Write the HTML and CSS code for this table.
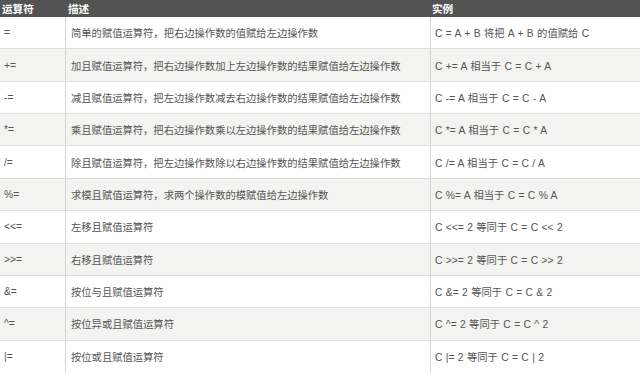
FILE: index.html
```html
<!DOCTYPE html>
<html lang="zh">
<head>
<meta charset="utf-8">
<link rel="stylesheet" href="styles.css">
</head>
<body>
<div class="table">
  <div class="th c1">运算符</div><div class="th c2">描述</div><div class="th c3">实例</div>

  <div class="td c1">=</div><div class="td c2">简单的赋值运算符，把右边操作数的值赋给左边操作数</div><div class="td c3">C = A + B 将把 A + B 的值赋给 C</div>

  <div class="td c1 alt">+=</div><div class="td c2 alt">加且赋值运算符，把右边操作数加上左边操作数的结果赋值给左边操作数</div><div class="td c3 alt">C += A 相当于 C = C + A</div>

  <div class="td c1">-=</div><div class="td c2">减且赋值运算符，把左边操作数减去右边操作数的结果赋值给左边操作数</div><div class="td c3">C -= A 相当于 C = C - A</div>

  <div class="td c1 alt">*=</div><div class="td c2 alt">乘且赋值运算符，把右边操作数乘以左边操作数的结果赋值给左边操作数</div><div class="td c3 alt">C *= A 相当于 C = C * A</div>

  <div class="td c1">/=</div><div class="td c2">除且赋值运算符，把左边操作数除以右边操作数的结果赋值给左边操作数</div><div class="td c3">C /= A 相当于 C = C / A</div>

  <div class="td c1 alt">%=</div><div class="td c2 alt">求模且赋值运算符，求两个操作数的模赋值给左边操作数</div><div class="td c3 alt">C %= A 相当于 C = C % A</div>

  <div class="td c1">&lt;&lt;=</div><div class="td c2">左移且赋值运算符</div><div class="td c3">C &lt;&lt;= 2 等同于 C = C &lt;&lt; 2</div>

  <div class="td c1 alt">&gt;&gt;=</div><div class="td c2 alt">右移且赋值运算符</div><div class="td c3 alt">C &gt;&gt;= 2 等同于 C = C &gt;&gt; 2</div>

  <div class="td c1">&amp;=</div><div class="td c2">按位与且赋值运算符</div><div class="td c3">C &amp;= 2 等同于 C = C &amp; 2</div>

  <div class="td c1 alt">^=</div><div class="td c2 alt">按位异或且赋值运算符</div><div class="td c3 alt">C ^= 2 等同于 C = C ^ 2</div>

  <div class="td c1 last">|=</div><div class="td c2 last">按位或且赋值运算符</div><div class="td c3 last">C |= 2 等同于 C = C | 2</div>
</div>
</body>
</html>
```

FILE: styles.css
```css
html, body {
  margin: 0;
  padding: 0;
  background: #ffffff;
}

.table {
  display: grid;
  grid-template-columns: 65px 365px 1fr;
  grid-template-rows: 17px repeat(11, 1fr);
  width: 640px;
  height: 373px;
  font-family: "Liberation Sans", "Noto Sans CJK SC", sans-serif;
  font-size: 10.3px;
  color: #555555;
}

.th {
  background: #535353;
  color: #ffffff;
  font-weight: bold;
  font-family: "Noto Sans CJK SC", sans-serif;
  font-size: 10.6px;
  display: flex;
  align-items: center;
  padding-left: 2px;
  white-space: nowrap;
}

.th.c2 {
  padding-left: 3px;
}

.td {
  display: flex;
  align-items: center;
  border-bottom: 1px solid #dddddd;
  white-space: nowrap;
  overflow: hidden;
  background: #ffffff;
  word-spacing: 0.5px;
}

.td.alt {
  background: #f3f3f1;
}

.td.last {
  border-bottom: none;
}

.td.c1 {
  padding-left: 4px;
}

.td.c2 {
  border-left: 1px solid #d4d4d4;
  padding-left: 5px;
}

.td.c3 {
  border-left: 1px solid #d4d4d4;
  padding-left: 4px;
}
```
